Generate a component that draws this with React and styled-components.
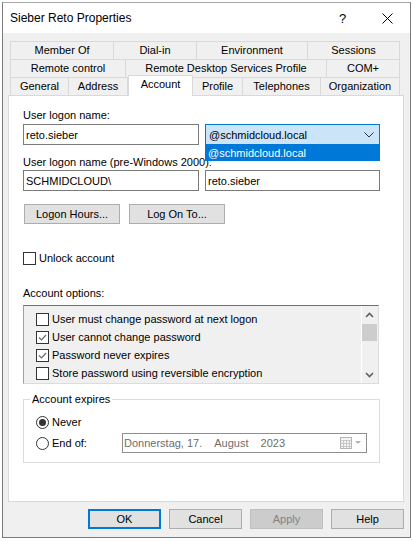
import React from 'react';
import styled, { createGlobalStyle } from 'styled-components';

const GlobalStyle = createGlobalStyle`
  html, body {
    margin: 0;
    padding: 0;
    background: #ffffff;
  }
  body {
    font-family: "Liberation Sans", Arial, sans-serif;
    font-size: 11px;
    color: #000000;
  }
`;

const tabRows = [
  [
    { label: 'Member Of', w: 104 },
    { label: 'Dial-in', w: 83 },
    { label: 'Environment', w: 111 },
    { label: 'Sessions', w: 92 },
  ],
  [
    { label: 'Remote control', w: 116 },
    { label: 'Remote Desktop Services Profile', w: 201 },
    { label: 'COM+', w: 73 },
  ],
  [
    { label: 'General', w: 59 },
    { label: 'Address', w: 59 },
    { label: 'Account', w: 65, active: true },
    { label: 'Profile', w: 50 },
    { label: 'Telephones', w: 78 },
    { label: 'Organization', w: 79 },
  ],
];

const options = [
  { label: 'User must change password at next logon', checked: false },
  { label: 'User cannot change password', checked: true },
  { label: 'Password never expires', checked: true },
  { label: 'Store password using reversible encryption', checked: false },
];

const App = () => {
  return (
    <>
      <GlobalStyle />
      <Window>
        <TitleBar>
          <Title>Sieber Reto Properties</Title>
          <CaptionButton>?</CaptionButton>
          <CaptionButton>
            <svg width="11" height="11" viewBox="0 0 11 11">
              <path d="M0.5 0.5 L10.5 10.5 M10.5 0.5 L0.5 10.5" stroke="#000" strokeWidth="1" fill="none" />
            </svg>
          </CaptionButton>
        </TitleBar>

        <Body>
          <Tabs>
            {tabRows.map((row, i) => (
              <TabRow key={i}>
                {row.map((t) => (
                  <Tab key={t.label} $w={t.w} $active={t.active}>
                    {t.label}
                  </Tab>
                ))}
              </TabRow>
            ))}
          </Tabs>

          <Panel>
            <Label $top={12}>User logon name:</Label>
            <FieldRow $top={2}>
              <Field>reto.sieber</Field>
              <ComboWrap>
                <Combo>
                  <span>@schmidcloud.local</span>
                  <svg width="10" height="6" viewBox="0 0 10 6">
                    <path d="M0.5 0.5 L5 5 L9.5 0.5" stroke="#333" strokeWidth="1" fill="none" />
                  </svg>
                </Combo>
                <DropList>@schmidcloud.local</DropList>
              </ComboWrap>
            </FieldRow>

            <Label $top={10}>User logon name (pre-Windows 2000):</Label>
            <FieldRow $top={1}>
              <Field>SCHMIDCLOUD\</Field>
              <Field $w={175}>reto.sieber</Field>
            </FieldRow>

            <ButtonRow>
              <PushButton $w={96}>Logon Hours...</PushButton>
              <PushButton $w={96}>Log On To...</PushButton>
            </ButtonRow>

            <CheckLine $top={27}>
              <Box />
              <span>Unlock account</span>
            </CheckLine>

            <Label $top={21}>Account options:</Label>
            <ListBox>
              <ListItems>
                {options.map((o) => (
                  <ListItem key={o.label}>
                    <Box>
                      {o.checked && (
                        <svg width="11" height="11" viewBox="0 0 11 11">
                          <path d="M2 5.5 L4.5 8 L9 3" stroke="#6a6a6a" strokeWidth="1.2" fill="none" />
                        </svg>
                      )}
                    </Box>
                    <span>{o.label}</span>
                  </ListItem>
                ))}
              </ListItems>
              <ScrollBar>
                <svg width="9" height="6" viewBox="0 0 9 6">
                  <path d="M1 5 L4.5 1.5 L8 5" stroke="#606060" strokeWidth="1.6" fill="none" />
                </svg>
                <Thumb />
                <ScrollSpacer />
                <svg width="9" height="6" viewBox="0 0 9 6">
                  <path d="M1 1 L4.5 4.5 L8 1" stroke="#606060" strokeWidth="1.6" fill="none" />
                </svg>
              </ScrollBar>
            </ListBox>

            <GroupBox>
              <Legend>Account expires</Legend>
              <RadioLine>
                <Radio $on />
                <span>Never</span>
              </RadioLine>
              <RadioLine $top={1}>
                <Radio />
                <RadioText>End of:</RadioText>
                <DatePicker>
                  <DateText>
                    <span>Donnerstag, 17.</span>
                    <DatePart $gap={12}>August</DatePart>
                    <DatePart $gap={12}>2023</DatePart>
                  </DateText>
                  <svg width="22" height="12" viewBox="0 0 22 12">
                    <rect x="0.5" y="0.5" width="11" height="11" fill="#f4f4f4" stroke="#b4b4b4" />
                    <path d="M0.5 3.5 H11.5 M0.5 6.5 H11.5 M0.5 9.5 H11.5 M3.5 3.5 V11.5 M6.5 3.5 V11.5 M9.5 3.5 V11.5" stroke="#c8c8c8" />
                    <path d="M15 4 L21 4 L18 7 Z" fill="#b4b4b4" />
                  </svg>
                </DatePicker>
              </RadioLine>
            </GroupBox>
          </Panel>

          <DialogButtons>
            <DialogButton $default>OK</DialogButton>
            <DialogButton>Cancel</DialogButton>
            <DialogButton $disabled>Apply</DialogButton>
            <DialogButton>Help</DialogButton>
          </DialogButtons>
        </Body>
      </Window>
    </>
  );
};

export default App;


const Window = styled.div`
  margin: 2px 0 0 2px;
  width: 409px;
  height: 536px;
  box-sizing: border-box;
  border: 1px solid #7a7a7a;
  border-top-color: #a8a8a8;
  background: #f0f0f0;
  display: flex;
  flex-direction: column;
`;

const TitleBar = styled.div`
  height: 30px;
  background: #ffffff;
  display: flex;
  align-items: center;
  padding-left: 7px;
`;

const Title = styled.div`
  flex: 1;
  font-size: 12px;
`;

const CaptionButton = styled.div`
  width: 45px;
  height: 30px;
  display: flex;
  align-items: center;
  justify-content: center;
  font-size: 13px;
`;

const Body = styled.div`
  flex: 1;
  display: flex;
  flex-direction: column;
  padding: 8px 6px 0 5px;
`;

const Tabs = styled.div`
  display: flex;
  flex-direction: column;
  padding: 0 3px 0 2px;
`;

const TabRow = styled.div`
  display: flex;
  height: 18px;
`;

const Tab = styled.div`
  width: ${(p) => p.$w}px;
  height: ${(p) => (p.$active ? 21 : 18)}px;
  margin-top: ${(p) => (p.$active ? -2 : 0)}px;
  margin-bottom: ${(p) => (p.$active ? -1 : 0)}px;
  box-sizing: border-box;
  border: 1px solid #d9d9d9;
  border-bottom: none;
  border-left-width: ${(p) => (p.$active ? 1 : 0)}px;
  background: ${(p) => (p.$active ? '#ffffff' : '#f0f0f0')};
  position: relative;
  z-index: ${(p) => (p.$active ? 2 : 0)};
  display: flex;
  justify-content: center;
  padding-top: 2px;
  white-space: nowrap;

  &:first-child {
    border-left-width: 1px;
  }
`;

const Panel = styled.div`
  height: 407px;
  box-sizing: border-box;
  border: 1px solid #d9d9d9;
  background: #ffffff;
  padding: 0 0 0 14px;
  display: flex;
  flex-direction: column;
  position: relative;
  z-index: 1;
`;

const Label = styled.div`
  margin-top: ${(p) => p.$top}px;
  height: 14px;
  line-height: 14px;
`;

const FieldRow = styled.div`
  display: flex;
  gap: 6px;
  margin-top: ${(p) => p.$top}px;
`;

const Field = styled.div`
  width: ${(p) => p.$w || 176}px;
  height: 21px;
  box-sizing: border-box;
  border: 1px solid #7a7a7a;
  background: #ffffff;
  padding-left: 2px;
  display: flex;
  align-items: center;
`;

const ComboWrap = styled.div`
  position: relative;
  width: 175px;
`;

const Combo = styled.div`
  height: 21px;
  box-sizing: border-box;
  border: 1px solid #0078d7;
  background: #cce4f7;
  display: flex;
  align-items: center;
  justify-content: space-between;
  padding: 0 5px 0 3px;
`;

const DropList = styled.div`
  position: absolute;
  left: 0;
  right: 0;
  top: 21px;
  height: 16px;
  background: #0078d7;
  color: #ffffff;
  padding-left: 3px;
  display: flex;
  align-items: center;
  z-index: 3;
`;

const ButtonRow = styled.div`
  display: flex;
  gap: 9px;
  margin-top: 13px;
  padding-left: 1px;
`;

const PushButton = styled.div`
  width: ${(p) => p.$w}px;
  height: 20px;
  box-sizing: border-box;
  border: 1px solid #adadad;
  background: #e1e1e1;
  display: flex;
  align-items: center;
  justify-content: center;
`;

const CheckLine = styled.div`
  display: flex;
  align-items: center;
  gap: 3px;
  height: 14px;
  margin-top: ${(p) => p.$top}px;
`;

const Box = styled.div`
  width: 13px;
  height: 13px;
  box-sizing: border-box;
  border: 1px solid #333333;
  background: #ffffff;
  display: flex;
  align-items: center;
  justify-content: center;
  flex-shrink: 0;
`;

const ListBox = styled.div`
  margin-top: 5px;
  width: 356px;
  height: 79px;
  box-sizing: border-box;
  border: 1px solid #dcdcdc;
  border-top-color: #6e6e6e;
  border-left-color: #a0a0a0;
  background: #f0f0f0;
  display: flex;
`;

const ListItems = styled.div`
  flex: 1;
  padding: 4px 0 0 12px;
`;

const ListItem = styled.div`
  display: flex;
  align-items: center;
  gap: 3px;
  height: 18px;
`;

const ScrollBar = styled.div`
  width: 16px;
  border-left: 1px solid #ffffff;
  margin-right: 1px;
  display: flex;
  flex-direction: column;
  align-items: center;
  padding: 6px 0 5px;
  box-sizing: border-box;
`;

const Thumb = styled.div`
  align-self: stretch;
  height: 17px;
  margin-top: 6px;
  background: #cdcdcd;
`;

const ScrollSpacer = styled.div`
  flex: 1;
`;

const GroupBox = styled.fieldset`
  margin: 8px 0 0 0;
  padding: 6px 0 0 12px;
  width: 357px;
  height: 71px;
  box-sizing: border-box;
  border: 1px solid #dcdcdc;
  min-width: 0;
`;

const Legend = styled.legend`
  padding: 0 2px;
  margin-left: -6px;
  line-height: 14px;
`;

const RadioLine = styled.div`
  display: flex;
  align-items: center;
  height: 20px;
  margin-top: ${(p) => p.$top || 0}px;
  gap: 3px;
`;

const Radio = styled.div`
  width: 13px;
  height: 13px;
  box-sizing: border-box;
  border: 1px solid #333333;
  border-radius: 50%;
  background: #ffffff;
  display: flex;
  align-items: center;
  justify-content: center;
  flex-shrink: 0;

  &::after {
    content: '';
    width: 7px;
    height: 7px;
    border-radius: 50%;
    background: ${(p) => (p.$on ? '#333333' : 'transparent')};
  }
`;

const RadioText = styled.span`
  width: 67px;
`;

const DatePicker = styled.div`
  width: 245px;
  height: 20px;
  box-sizing: border-box;
  border: 1px solid #8f8f8f;
  display: flex;
  align-items: center;
  justify-content: space-between;
  padding: 0 4px 0 1px;
  color: #6d6d6d;
`;

const DateText = styled.div`
  display: flex;
  white-space: nowrap;
`;

const DatePart = styled.span`
  margin-left: ${(p) => p.$gap}px;
`;

const DialogButtons = styled.div`
  display: flex;
  justify-content: flex-end;
  gap: 8px;
  margin-top: 7px;
`;

const DialogButton = styled.div`
  width: 73px;
  height: 20px;
  box-sizing: border-box;
  border: ${(p) => (p.$default ? '2px solid #0078d7' : p.$disabled ? '1px solid #bfbfbf' : '1px solid #adadad')};
  background: ${(p) => (p.$disabled ? '#cccccc' : '#e1e1e1')};
  color: ${(p) => (p.$disabled ? '#838383' : '#000000')};
  display: flex;
  align-items: center;
  justify-content: center;
`;
